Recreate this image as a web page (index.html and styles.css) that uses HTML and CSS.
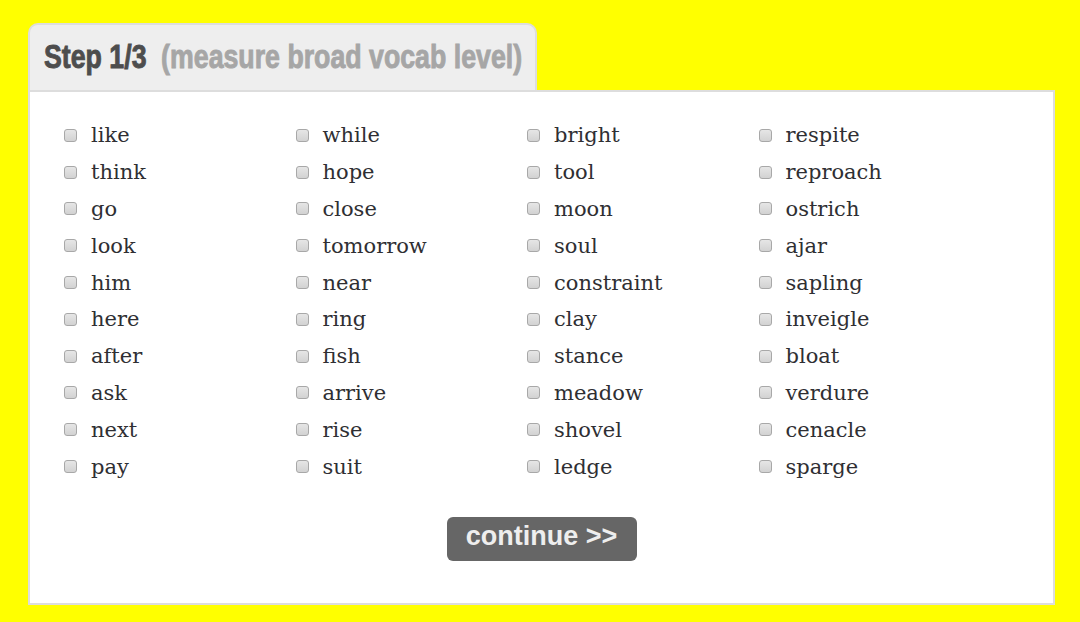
FILE: index.html
```html
<!DOCTYPE html>
<html>
<head>
<meta charset="utf-8">
<link rel="stylesheet" href="styles.css">
</head>
<body>
<div class="wrap">
  <div class="tab"><div class="title"><span class="step">Step 1/3</span><span class="sub">(measure broad vocab level)</span></div></div>
  <div class="panel">
    <div class="grid">
      <div class="col">
        <label class="item"><input type="checkbox" class="cb"><span>like</span></label>
        <label class="item"><input type="checkbox" class="cb"><span>think</span></label>
        <label class="item"><input type="checkbox" class="cb"><span>go</span></label>
        <label class="item"><input type="checkbox" class="cb"><span>look</span></label>
        <label class="item"><input type="checkbox" class="cb"><span>him</span></label>
        <label class="item"><input type="checkbox" class="cb"><span>here</span></label>
        <label class="item"><input type="checkbox" class="cb"><span>after</span></label>
        <label class="item"><input type="checkbox" class="cb"><span>ask</span></label>
        <label class="item"><input type="checkbox" class="cb"><span>next</span></label>
        <label class="item"><input type="checkbox" class="cb"><span>pay</span></label>
      </div>
      <div class="col">
        <label class="item"><input type="checkbox" class="cb"><span>while</span></label>
        <label class="item"><input type="checkbox" class="cb"><span>hope</span></label>
        <label class="item"><input type="checkbox" class="cb"><span>close</span></label>
        <label class="item"><input type="checkbox" class="cb"><span>tomorrow</span></label>
        <label class="item"><input type="checkbox" class="cb"><span>near</span></label>
        <label class="item"><input type="checkbox" class="cb"><span>ring</span></label>
        <label class="item"><input type="checkbox" class="cb"><span>fish</span></label>
        <label class="item"><input type="checkbox" class="cb"><span>arrive</span></label>
        <label class="item"><input type="checkbox" class="cb"><span>rise</span></label>
        <label class="item"><input type="checkbox" class="cb"><span>suit</span></label>
      </div>
      <div class="col">
        <label class="item"><input type="checkbox" class="cb"><span>bright</span></label>
        <label class="item"><input type="checkbox" class="cb"><span>tool</span></label>
        <label class="item"><input type="checkbox" class="cb"><span>moon</span></label>
        <label class="item"><input type="checkbox" class="cb"><span>soul</span></label>
        <label class="item"><input type="checkbox" class="cb"><span>constraint</span></label>
        <label class="item"><input type="checkbox" class="cb"><span>clay</span></label>
        <label class="item"><input type="checkbox" class="cb"><span>stance</span></label>
        <label class="item"><input type="checkbox" class="cb"><span>meadow</span></label>
        <label class="item"><input type="checkbox" class="cb"><span>shovel</span></label>
        <label class="item"><input type="checkbox" class="cb"><span>ledge</span></label>
      </div>
      <div class="col">
        <label class="item"><input type="checkbox" class="cb"><span>respite</span></label>
        <label class="item"><input type="checkbox" class="cb"><span>reproach</span></label>
        <label class="item"><input type="checkbox" class="cb"><span>ostrich</span></label>
        <label class="item"><input type="checkbox" class="cb"><span>ajar</span></label>
        <label class="item"><input type="checkbox" class="cb"><span>sapling</span></label>
        <label class="item"><input type="checkbox" class="cb"><span>inveigle</span></label>
        <label class="item"><input type="checkbox" class="cb"><span>bloat</span></label>
        <label class="item"><input type="checkbox" class="cb"><span>verdure</span></label>
        <label class="item"><input type="checkbox" class="cb"><span>cenacle</span></label>
        <label class="item"><input type="checkbox" class="cb"><span>sparge</span></label>
      </div>
    </div>
    <div class="actions"><button class="btn">continue &gt;&gt;</button></div>
  </div>
</div>
</body>
</html>
```
FILE: styles.css
```css
html, body {
  margin: 0;
  padding: 0;
  background: #ffff00;
}
.wrap {
  padding: 23px 0 0 28px;
  width: 1027px;
}
.tab {
  box-sizing: border-box;
  width: 509px;
  height: 68px;
  background: #eeeeee;
  border: 2px solid #dddddd;
  border-bottom: none;
  border-radius: 10px 10px 0 0;
  display: flex;
  align-items: center;
  padding: 0 0 2px 14px;
  white-space: nowrap;
}
.title {
  font-family: "Liberation Sans", Arial, sans-serif;
  font-weight: bold;
  font-size: 33px;
  -webkit-text-stroke: 0.9px currentColor;
  transform: scaleX(0.81);
  transform-origin: left center;
}
.step {
  color: #4d4d4d;
  margin-right: 18px;
  -webkit-text-stroke-color: #4d4d4d;
}
.sub {
  color: #a6a6a6;
  -webkit-text-stroke-color: #a6a6a6;
}
.panel {
  box-sizing: border-box;
  width: 1027px;
  height: 515px;
  margin-top: -1px;
  background: #ffffff;
  border: 2px solid #dddddd;
  padding: 25px 0 0 34px;
}
.grid {
  display: grid;
  grid-template-columns: repeat(4, 231.5px);
}
.col {
  display: flex;
  flex-direction: column;
}
.item {
  display: flex;
  align-items: center;
  height: 36.8px;
  font-family: "DejaVu Serif", serif;
  font-size: 21px;
  color: #2f2f33;
}
.cb {
  appearance: none;
  -webkit-appearance: none;
  box-sizing: border-box;
  width: 13px;
  height: 13px;
  margin: 0 14px 0 0;
  border: 1px solid #a8a8a8;
  border-radius: 3px;
  background: linear-gradient(#e6e6e6, #d2d2d2);
  flex: none;
}
.actions {
  display: flex;
  justify-content: center;
  padding-top: 32px;
  padding-right: 34px;
}
.btn {
  width: 190px;
  height: 44px;
  border: none;
  border-radius: 6px;
  background: #666666;
  color: #eeeeee;
  font-family: "Liberation Sans", Arial, sans-serif;
  font-weight: bold;
  font-size: 27px;
  padding: 0 0 4px 0;
}
```
